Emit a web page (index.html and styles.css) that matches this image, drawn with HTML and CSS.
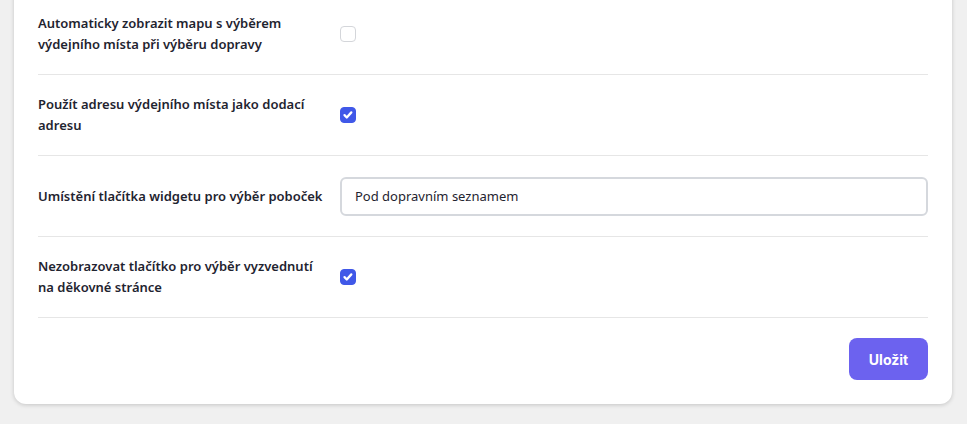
FILE: index.html
```html
<!DOCTYPE html>
<html lang="cs">

<head>
    <meta charset="UTF-8">
    <meta name="viewport" content="width=device-width, initial-scale=1.0">
    <title>Nastavení</title>
    <link rel="stylesheet" href="styles.css">
</head>

<body>
    <div class="card">
        <div class="row">
            <label class="label" for="autoMap">Automaticky zobrazit mapu s výběrem výdejního místa při výběru dopravy</label>
            <div class="control"><input type="checkbox" id="autoMap" class="check"></div>
        </div>
        <div class="row">
            <label class="label" for="useAddress">Použít adresu výdejního místa jako dodací adresu</label>
            <div class="control"><input type="checkbox" id="useAddress" class="check" checked></div>
        </div>
        <div class="row">
            <label class="label" for="position">Umístění tlačítka widgetu pro výběr poboček</label>
            <div class="control"><input type="text" id="position" class="field" value="Pod dopravním seznamem"></div>
        </div>
        <div class="row">
            <label class="label" for="hideButton">Nezobrazovat tlačítko pro výběr vyzvednutí na děkovné stránce</label>
            <div class="control"><input type="checkbox" id="hideButton" class="check" checked></div>
        </div>
        <div class="footer">
            <button class="btn">Uložit</button>
        </div>
    </div>
</body>

</html>
```

FILE: styles.css
```css
* {
    margin: 0;
    padding: 0;
    box-sizing: border-box;
}

body {
    background-color: #f0f0f0;
    font-family: "Noto Sans", "Open Sans", sans-serif;
    color: #1f2430;
    padding: 0 15px 20px 14px;
}

.card {
    margin-top: -6px;
    background-color: #fff;
    border-radius: 0 0 12px 12px;
    box-shadow: 0 1px 4px rgba(0, 0, 0, 0.18);
    padding: 0 24px 24px;
}

.row {
    display: grid;
    grid-template-columns: 290px 1fr;
    column-gap: 12px;
    align-items: center;
    min-height: 81px;
    padding: 18px 0;
    border-bottom: 1px solid #e6e6e6;
}

.label {
    font-size: 13px;
    font-weight: 600;
    line-height: 21px;
}

.control {
    display: flex;
    align-items: center;
}

.check {
    appearance: none;
    width: 16px;
    height: 16px;
    border: 1px solid #d4d6da;
    border-radius: 4px;
    background-color: #fff;
    cursor: pointer;
}

.check:checked {
    border-color: #4058e8;
    background-color: #4058e8;
    background-image: url("data:image/svg+xml,%3Csvg xmlns='http://www.w3.org/2000/svg' viewBox='0 0 16 16'%3E%3Cpath d='M4 8.2l2.6 2.6 5.2-5.8' fill='none' stroke='%23fff' stroke-width='2.6' stroke-linecap='round' stroke-linejoin='round'/%3E%3C/svg%3E");
    background-size: 100% 100%;
}

.field {
    width: 100%;
    height: 39px;
    border: 2px solid #d5d8dd;
    border-radius: 6px;
    padding: 0 13px;
    font-family: inherit;
    font-size: 13px;
    color: #1f2430;
    outline: none;
}

.footer {
    display: flex;
    justify-content: flex-end;
    padding-top: 20px;
}

.btn {
    width: 79px;
    height: 42px;
    border: none;
    border-radius: 8px;
    background-color: #6c62ef;
    color: #fff;
    font-family: "Inter", "Noto Sans", sans-serif;
    font-size: 14px;
    font-weight: 700;
    cursor: pointer;
}
```
